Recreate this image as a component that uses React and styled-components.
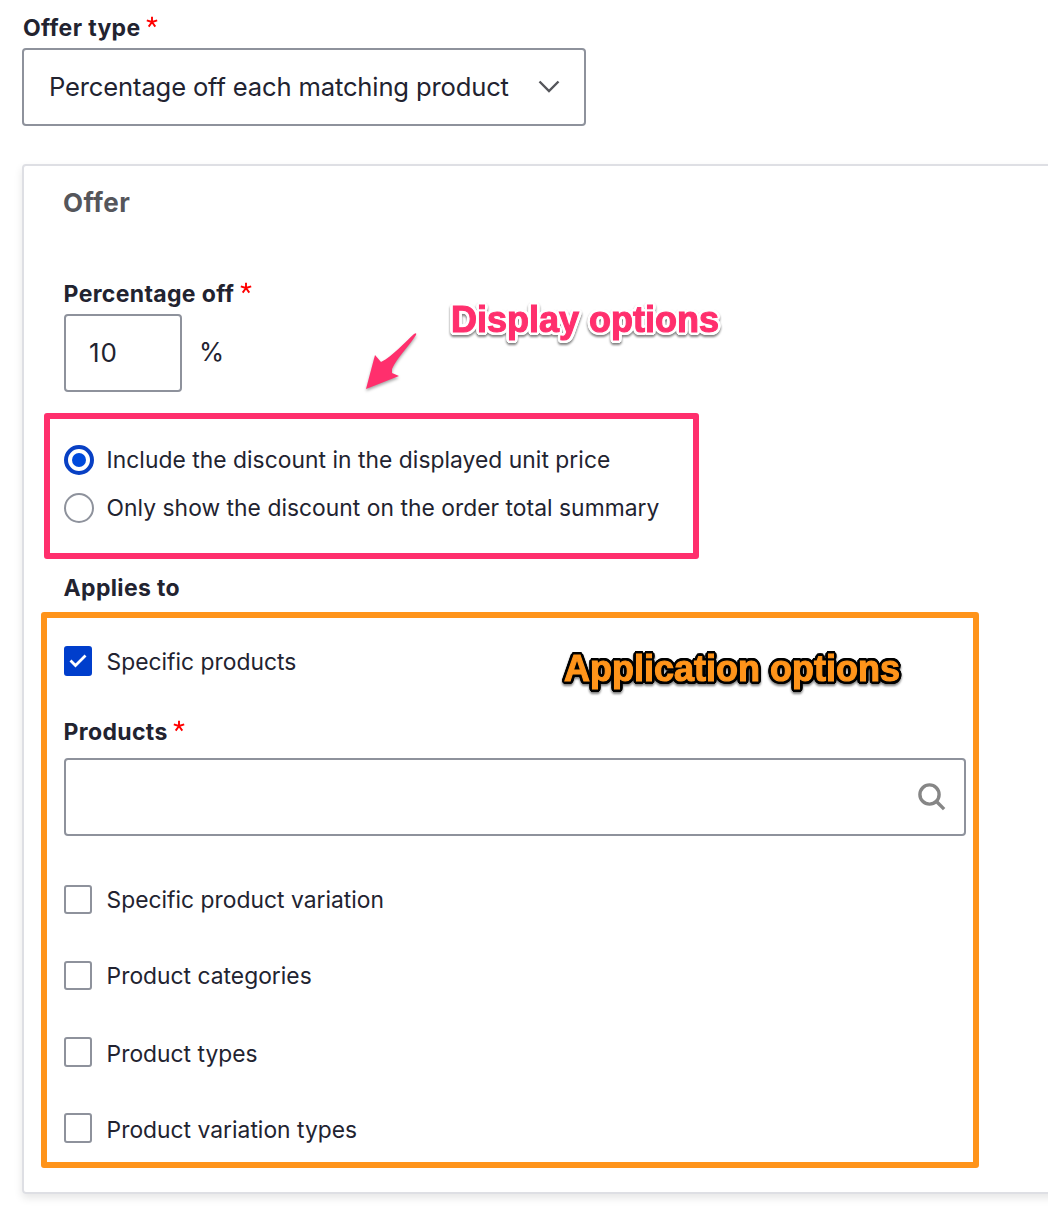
import React from 'react';
import styled, { createGlobalStyle } from 'styled-components';

const GlobalStyle = createGlobalStyle`
  *, *::before, *::after { box-sizing: border-box; }
  body {
    margin: 0;
    background: #fff;
    color: #222330;
    font-family: Inter, "Liberation Sans", sans-serif;
    overflow: hidden;
  }
`;

const Page = styled.main`
  width: 1048px;
  height: 1220px;
  padding: 12px 0 0 22px;
  overflow: hidden;
`;

const Label = styled.div`
  display: flex;
  align-items: flex-start;
  height: 32px;
  margin-top: ${(p) => p.$top || 0}px;
  margin-bottom: ${(p) => p.$bottom ?? 4}px;
  margin-left: ${(p) => p.$indent ?? -0.4}px;
  font-size: 23px;
  line-height: 32px;
  font-weight: 700;
  letter-spacing: 0.34px;
  white-space: nowrap;
`;

const Star = styled.svg`
  width: 12px;
  height: 12px;
  margin: 4px 0 0 5.6px;
  stroke: #f00;
  stroke-width: 1.9;
  fill: none;
`;

const Field = styled.div`
  display: flex;
  align-items: center;
  justify-content: space-between;
  width: ${(p) => p.$width}px;
  height: 78px;
  padding: 0 ${(p) => p.$right ?? 24}px 0 ${(p) => p.$left ?? 24}px;
  border: 2px solid #8e929c;
  border-radius: 4px;
  background: #fff;
  line-height: 36px;
  white-space: nowrap;
`;

const FieldText = styled.span`
  font-size: ${(p) => p.$size || 25.6}px;
  letter-spacing: ${(p) => p.$spacing || 0}px;
`;

const Card = styled.section`
  width: 1060px;
  height: 1030px;
  margin-top: 38px;
  padding: 19px 0 0 40px;
  border: 2px solid #dedfe4;
  border-radius: 4px;
  box-shadow: 0 4px 8px rgba(0, 0, 0, 0.1);
`;

const Title = styled.h2`
  margin: 0 0 57px -1px;
  font-size: 26px;
  line-height: 36px;
  font-weight: 700;
  letter-spacing: 0.4px;
  color: #55565b;
`;

const Amount = styled.div`
  display: flex;
  align-items: center;
  gap: 17px;
`;

const Suffix = styled.span`
  padding-bottom: 2px;
  font-size: 25.6px;
  line-height: 36px;
`;

const Group = styled.div`
  position: relative;
  width: 902px;
  margin-top: ${(p) => p.$top}px;
  height: ${(p) => p.$height}px;
`;

const Outline = styled.div`
  position: absolute;
  left: ${(p) => p.$x}px;
  top: ${(p) => p.$y}px;
  width: ${(p) => p.$width}px;
  height: ${(p) => p.$height}px;
  border: 6px solid ${(p) => p.$color};
  border-radius: 3px;
  pointer-events: none;
`;

const halo = (color, radius) =>
  Array.from({ length: 24 }, (_, i) => {
    const angle = (i * Math.PI) / 12;
    const x = (Math.cos(angle) * radius).toFixed(2);
    const y = (Math.sin(angle) * radius).toFixed(2);
    return `${x}px ${y}px 0 ${color}`;
  }).join(', ');

const Callout = styled.div`
  position: absolute;
  left: ${(p) => p.$x}px;
  top: ${(p) => p.$y}px;
  font: 700 36px/40px "Liberation Sans", sans-serif;
  color: ${(p) => p.$color};
  -webkit-text-stroke: 1.1px ${(p) => p.$color};
  text-shadow: ${(p) => halo(p.$halo, 3)};
  filter: drop-shadow(0 2px 1.2px rgba(0, 0, 0, 0.5));
  white-space: nowrap;
`;

const Arrow = styled.svg`
  position: absolute;
  left: 296px;
  top: -116px;
  width: 64px;
  height: 68px;
  filter: drop-shadow(0 2px 1.5px rgba(0, 0, 0, 0.35));
`;

const Option = styled.label`
  display: flex;
  align-items: flex-start;
  height: 32px;
  margin-bottom: ${(p) => p.$gap || 0}px;
`;

const OptionText = styled.span`
  margin-left: ${(p) => p.$left ?? 14.6}px;
  font-size: 22.8px;
  line-height: 32px;
  letter-spacing: ${(p) => p.$spacing ?? 0.02}px;
  white-space: nowrap;
`;

const Radio = styled.span`
  display: grid;
  place-items: center;
  width: 30px;
  height: 30px;
  margin-top: 1px;
  border: ${(p) => (p.$on ? '4px solid #0840c4' : '2px solid #8e929c')};
  border-radius: 50%;
`;

const Dot = styled.span`
  width: 14px;
  height: 14px;
  border-radius: 50%;
  background: #004adc;
`;

const Check = styled.span`
  display: grid;
  place-items: center;
  width: 28px;
  height: ${(p) => p.$height || 28}px;
  margin-top: ${(p) => p.$offset || 0}px;
  border: 2px solid ${(p) => (p.$on ? '#003ecc' : '#8e929c')};
  border-radius: 3px;
  background: ${(p) => (p.$on ? '#003ecc' : '#fff')};
`;

const Icon = styled.svg`
  display: block;
  fill: none;
  flex: none;
`;

const Required = () => (
  <Star viewBox="0 0 12 12">
    <path d="M6 .7V6M6 6 .8 4.3M6 6l5.2-1.7M6 6l-3.3 4.6M6 6l3.3 4.6" />
  </Star>
);

const options = [
  { text: 'Specific product variation', gap: 44, offset: 1, height: 29 },
  { text: 'Product categories', gap: 46, offset: 1, height: 29 },
  { text: 'Product types', gap: 44, offset: -1, height: 30 },
  { text: 'Product variation types', gap: 0, offset: -1, height: 30 },
];

export default function App() {
  return (
    <>
      <GlobalStyle />
      <Page>
        <Label $indent={1}>Offer type <Required /></Label>
        <Field $width={564} $left={25}>
          <FieldText $spacing={-0.16}>Percentage off each matching product</FieldText>
          <Icon width="22" height="14" viewBox="0 0 22 14">
            <path d="m1.5 1.5 9.5 9.5 9.5-9.5" stroke="#55565b" strokeWidth="2.4" />
          </Icon>
        </Field>
        <Card>
          <Title>Offer</Title>
          <Label>Percentage off <Required /></Label>
          <Amount>
            <Field $width={118} $left={23}>
              <FieldText $size={26} $spacing={0.8}>10</FieldText>
            </Field>
            <Suffix>%</Suffix>
          </Amount>
          <Group $top={52} $height={80}>
            <Option $gap={16}>
              <Radio $on><Dot /></Radio>
              <OptionText $left={12.6} $spacing={0.045}>Include the discount in the displayed unit price</OptionText>
            </Option>
            <Option>
              <Radio />
              <OptionText $left={12.6} $spacing={0.04}>Only show the discount on the order total summary</OptionText>
            </Option>
            <Outline $x={-20} $y={-31} $width={655} $height={146} $color="#ff2f6d" />
            <Arrow viewBox="0 0 64 68">
              <path d="M6 61 15 27l6 7C33 28 45 14 54 6q3-2 2 1C49 18 37 30 32 41v4l7 3Z" fill="#ff2f6d" />
            </Arrow>
            <Callout $x={387} $y={-144} $color="#ff2f6d" $halo="#fff">Display options</Callout>
          </Group>
          <Label $top={48} $bottom={42}>Applies to</Label>
          <Group $top={0} $height={500}>
            <Option $gap={38}>
              <Check $on $height={30}>
                <Icon width="18" height="14" viewBox="0 0 18 14">
                  <path d="m1.5 6.5 5 5L16.5 1.5" stroke="#fff" strokeWidth="2.8" />
                </Icon>
              </Check>
              <OptionText>Specific products</OptionText>
            </Option>
            <Label $bottom={10}>Products <Required /></Label>
            <Field $width={902} $right={17.5}>
              <FieldText />
              <Icon width="30" height="30" viewBox="0 0 30 30">
                <circle cx="12.5" cy="12.5" r="9.6" stroke="#868686" strokeWidth="3.4" />
                <path d="m19.5 19.5 7.6 7.6" stroke="#868686" strokeWidth="3.4" />
              </Icon>
            </Field>
            <Group $top={48} $height={262}>
              {options.map((o) => (
                <Option key={o.text} $gap={o.gap}>
                  <Check $height={o.height} $offset={o.offset} />
                  <OptionText>{o.text}</OptionText>
                </Option>
              ))}
            </Group>
            <Outline $x={-23} $y={-34} $width={938} $height={556} $color="#ff941a" />
            <Callout $x={500} $y={3} $color="#ff941a" $halo="#000">Application options</Callout>
          </Group>
        </Card>
      </Page>
    </>
  );
}
